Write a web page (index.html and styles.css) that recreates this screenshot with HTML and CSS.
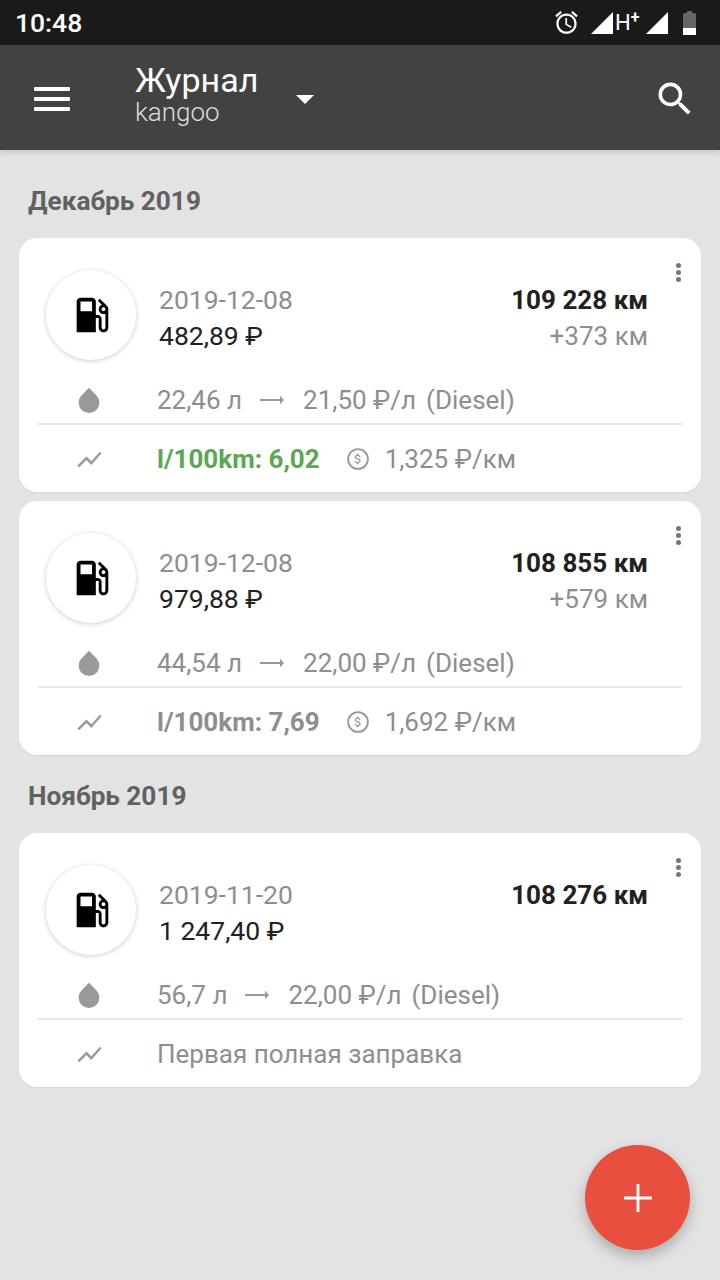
FILE: index.html
```html
<!DOCTYPE html>
<html lang="ru">
<head>
    <meta charset="UTF-8">
    <meta name="viewport" content="width=device-width, initial-scale=1.0">
    <title>Журнал</title>
    <link rel="stylesheet" href="styles.css">
</head>
<body>
    <svg class="sprites" width="0" height="0">
        <symbol id="i-pump" viewBox="0 0 24 24"><path d="M19.77 7.23l.01-.01-3.72-3.72L15 4.56l2.11 2.11c-.94.36-1.61 1.26-1.61 2.33 0 1.38 1.12 2.5 2.5 2.5.36 0 .69-.08 1-.21v7.21c0 .55-.45 1-1 1s-1-.45-1-1V14c0-1.1-.9-2-2-2h-1V5c0-1.1-.9-2-2-2H6c-1.1 0-2 .9-2 2v16h10v-7.5h1.5v5c0 1.38 1.12 2.5 2.5 2.5s2.5-1.12 2.5-2.5V9c0-.69-.28-1.32-.73-1.77zM12 10H6V5h6v5zm6 0c-.55 0-1-.45-1-1s.45-1 1-1 1 .45 1 1-.45 1-1 1z"/></symbol>
        <symbol id="i-drop" viewBox="0 0 24 24"><path d="M12 2.2l6 6.2a8.3 8.3 0 1 1-12 0z"/></symbol>
        <symbol id="i-chart" viewBox="0 0 24 24"><path d="M3.5 18.49l6-6.01 4 4L22 6.92l-1.41-1.41-7.09 7.97-4-4L2 16.99z"/></symbol>
        <symbol id="i-arrow" viewBox="0 0 26 12"><path d="M1 5h20V1.8l4 4.2-4 4.2V7H1z"/></symbol>
        <symbol id="i-money" viewBox="0 0 24 24">
            <circle cx="12" cy="12" r="10.8" fill="none" stroke="currentColor" stroke-width="2"/>
            <path transform="translate(4.2 4.2) scale(.65)" d="M11.8 10.9c-2.27-.59-3-1.2-3-2.15 0-1.09 1.01-1.85 2.7-1.85 1.78 0 2.44.85 2.5 2.1h2.21c-.07-1.72-1.12-3.3-3.21-3.81V3h-3v2.16c-1.94.42-3.5 1.68-3.5 3.61 0 2.31 1.91 3.46 4.7 4.13 2.5.6 3 1.48 3 2.41 0 .69-.49 1.79-2.7 1.79-2.06 0-2.87-.92-2.98-2.1h-2.2c.12 2.19 1.76 3.42 3.68 3.83V21h3v-2.15c1.95-.37 3.5-1.5 3.5-3.55 0-2.84-2.43-3.81-4.7-4.4z"/>
        </symbol>
    </svg>

    <div class="statusbar">
        <span class="clock">10:48</span>
        <div class="status-icons">
            <svg class="alarm" viewBox="0 0 24 24"><path d="M22 5.72l-4.6-3.86-1.29 1.53 4.6 3.86L22 5.72zM7.88 3.39L6.6 1.86 2 5.71l1.29 1.53 4.59-3.85zM12.5 8H11v6l4.75 2.85.75-1.23-4-2.37V8zM12 4c-4.97 0-9 4.03-9 9s4.03 9 9 9 9-4.03 9-9-4.03-9-9-9zm0 16c-3.87 0-7-3.13-7-7s3.13-7 7-7 7 3.13 7 7-3.13 7-7 7z"/></svg>
            <svg class="signal" viewBox="0 0 22 22"><path d="M22 0v22H0z"/></svg>
            <span class="net">H<sup>+</sup></span>
            <svg class="signal" viewBox="0 0 22 22"><path d="M22 0v22H0z"/></svg>
            <div class="battery"><div class="battery-fill"></div></div>
        </div>
    </div>

    <header class="toolbar">
        <div class="menu-btn"><span></span><span></span><span></span></div>
        <div class="title-box">
            <div class="title">Журнал</div>
            <div class="subtitle">kangoo</div>
        </div>
        <div class="caret"></div>
        <svg class="search" viewBox="0 0 24 24"><path d="M15.5 14h-.79l-.28-.27A6.47 6.47 0 0 0 16 9.5 6.5 6.5 0 1 0 9.5 16c1.61 0 3.09-.59 4.23-1.57l.27.28v.79l5 4.99L20.49 19l-4.99-5zm-6 0C7.01 14 5 11.99 5 9.5S7.01 5 9.5 5 14 7.01 14 9.5 11.99 14 9.5 14z"/></svg>
    </header>

    <main class="journal">
        <h2 class="month">Декабрь 2019</h2>

        <article class="card">
            <div class="dots"><i></i><i></i><i></i></div>
            <div class="card-head">
                <div class="pump"><svg><use href="#i-pump"/></svg></div>
                <div class="head-left">
                    <div class="muted">2019-12-08</div>
                    <div class="price">482,89 ₽</div>
                </div>
                <div class="head-right">
                    <div class="odo">109 228 км</div>
                    <div class="muted">+373 км</div>
                </div>
            </div>
            <div class="row row-fuel">
                <div class="row-icon"><svg class="drop"><use href="#i-drop"/></svg></div>
                <span>22,46 л</span>
                <svg class="arrow"><use href="#i-arrow"/></svg>
                <span>21,50 ₽/л</span>
                <span>(Diesel)</span>
            </div>
            <div class="row row-stat">
                <div class="row-icon"><svg class="chart"><use href="#i-chart"/></svg></div>
                <b class="usage good">l/100km: 6,02</b>
                <svg class="money"><use href="#i-money"/></svg>
                <span>1,325 ₽/км</span>
            </div>
        </article>

        <article class="card">
            <div class="dots"><i></i><i></i><i></i></div>
            <div class="card-head">
                <div class="pump"><svg><use href="#i-pump"/></svg></div>
                <div class="head-left">
                    <div class="muted">2019-12-08</div>
                    <div class="price">979,88 ₽</div>
                </div>
                <div class="head-right">
                    <div class="odo">108 855 км</div>
                    <div class="muted">+579 км</div>
                </div>
            </div>
            <div class="row row-fuel">
                <div class="row-icon"><svg class="drop"><use href="#i-drop"/></svg></div>
                <span>44,54 л</span>
                <svg class="arrow"><use href="#i-arrow"/></svg>
                <span>22,00 ₽/л</span>
                <span>(Diesel)</span>
            </div>
            <div class="row row-stat">
                <div class="row-icon"><svg class="chart"><use href="#i-chart"/></svg></div>
                <b class="usage">l/100km: 7,69</b>
                <svg class="money"><use href="#i-money"/></svg>
                <span>1,692 ₽/км</span>
            </div>
        </article>

        <h2 class="month">Ноябрь 2019</h2>

        <article class="card">
            <div class="dots"><i></i><i></i><i></i></div>
            <div class="card-head">
                <div class="pump"><svg><use href="#i-pump"/></svg></div>
                <div class="head-left">
                    <div class="muted">2019-11-20</div>
                    <div class="price">1 247,40 ₽</div>
                </div>
                <div class="head-right">
                    <div class="odo">108 276 км</div>
                </div>
            </div>
            <div class="row row-fuel">
                <div class="row-icon"><svg class="drop"><use href="#i-drop"/></svg></div>
                <span>56,7 л</span>
                <svg class="arrow"><use href="#i-arrow"/></svg>
                <span>22,00 ₽/л</span>
                <span>(Diesel)</span>
            </div>
            <div class="row row-stat">
                <div class="row-icon"><svg class="chart"><use href="#i-chart"/></svg></div>
                <span>Первая полная заправка</span>
            </div>
        </article>
    </main>

    <button class="fab"><svg viewBox="0 0 28 28"><path d="M12.6 0h2.8v12.6H28v2.8H15.4V28h-2.8V15.4H0v-2.8h12.6z"/></svg></button>
</body>
</html>
```

FILE: styles.css
```css
* {
    box-sizing: border-box;
}
body {
    position: relative;
    width: 720px;
    height: 1280px;
    margin: 0;
    overflow: hidden;
    font-family: Roboto, "Noto Sans", sans-serif;
    font-size: 26.5px;
    color: #212121;
    background: #e3e3e3;
}
.sprites {
    position: absolute;
}

/* status bar */
.statusbar {
    display: flex;
    align-items: center;
    justify-content: space-between;
    height: 45px;
    padding: 0 24px 0 15px;
    background: #1a1a1a;
    color: #fff;
}
.clock {
    font-size: 26.5px;
    font-weight: 500;
}
.status-icons {
    display: flex;
    align-items: center;
    fill: #fff;
}
.alarm {
    width: 27px;
    height: 27px;
    margin-right: 11px;
}
.signal {
    width: 22px;
    height: 22px;
}
.net {
    width: 31px;
    margin-left: 2px;
    font-size: 22px;
    line-height: 22px;
}
.net sup {
    font-size: 16px;
    font-weight: 700;
    line-height: 0;
    vertical-align: 7px;
}
.signal + .battery {
    margin-left: 15px;
}
.battery {
    position: relative;
    width: 13px;
    height: 22px;
    margin-top: 2px;
    background: #666;
    border-radius: 2px 2px 0 0;
}
.battery::before {
    content: "";
    position: absolute;
    top: -2px;
    left: 4px;
    width: 5px;
    height: 2px;
    background: #666;
}
.battery-fill {
    position: absolute;
    left: 0;
    right: 0;
    bottom: 0;
    height: 7px;
    background: #fff;
}

/* toolbar */
.toolbar {
    display: flex;
    align-items: center;
    height: 105px;
    padding-left: 34px;
    background: #424242;
    box-shadow: 0 2px 6px rgba(0,0,0,0.15);
    color: #fff;
}
.menu-btn {
    display: flex;
    flex-direction: column;
    gap: 6px;
    width: 36px;
    margin-top: 2px;
}
.menu-btn span {
    height: 4px;
    background: #fff;
    border-radius: 1px;
}
.title-box {
    margin-left: 65px;
    width: 161px;
    margin-top: -4px;
}
.title {
    font-size: 34px;
    line-height: 34px;
    margin-top: -2px;
}
.subtitle {
    font-size: 26px;
    font-weight: 300;
    line-height: 30px;
    color: #ddd;
}
.caret {
    width: 0;
    height: 0;
    margin-top: 3px;
    border-left: 9.5px solid transparent;
    border-right: 9.5px solid transparent;
    border-top: 9.5px solid #fff;
}
.search {
    width: 44px;
    height: 44px;
    margin-left: auto;
    margin-right: 23px;
    margin-top: 3px;
    fill: #fff;
}

/* journal list */
.journal {
    padding: 0 19px;
}
.month {
    margin: 0;
    padding: 33px 9px 19px;
    font-size: 26.2px;
    line-height: 36px;
    font-weight: 700;
    color: #616161;
}
.card + .month {
    padding-top: 14px;
    padding-bottom: 19px;
}
.card {
    position: relative;
    height: 254px;
    margin-bottom: 9px;
    padding: 32px 19px 0;
    background: #fff;
    border-radius: 18px;
    box-shadow: 0 1px 2px rgba(0,0,0,0.06);
}
.dots {
    position: absolute;
    top: 25px;
    right: 20px;
    display: flex;
    flex-direction: column;
    gap: 2px;
}
.dots i {
    width: 5px;
    height: 5px;
    background: #757575;
    border-radius: 50%;
}
.card-head {
    display: flex;
    height: 90px;
    padding-left: 8px;
}
.pump {
    display: flex;
    align-items: center;
    justify-content: center;
    flex: none;
    width: 90px;
    height: 90px;
    background: #fff;
    border-radius: 50%;
    box-shadow: 0 1px 5px rgba(0,0,0,0.2);
}
.pump svg {
    width: 46px;
    height: 46px;
    margin-left: 1px;
    fill: #000;
}
.head-left,
.head-right {
    padding-top: 12px;
    line-height: 36px;
}
.head-left {
    margin-left: 23px;
}
.head-right {
    margin-left: auto;
    margin-right: 34px;
    text-align: right;
    font-size: 26px;
}
.muted {
    color: #8e8e8e;
}
.price {
    color: #212121;
}
.odo {
    font-weight: 700;
    color: #212121;
}
.row {
    display: flex;
    align-items: center;
    font-size: 26px;
    color: #8e8e8e;
    fill: #999;
}
.row-icon {
    display: flex;
    justify-content: center;
    flex: none;
    width: 119px;
    padding-right: 17px;
}
.row-fuel {
    height: 65px;
    padding-top: 16px;
    border-bottom: 2px solid #e6e6e6;
}
.row-fuel .arrow {
    width: 26px;
    height: 12px;
    margin: 0 18px 0 17px;
}
.row-fuel span:last-child {
    margin-left: 10px;
}
.row-stat {
    height: 68px;
}
.drop {
    width: 30px;
    height: 30px;
}
.chart {
    width: 29px;
    height: 29px;
}
.money {
    flex: none;
    width: 22px;
    height: 22px;
    margin: 0 16px 0 27px;
    color: #999;
}
.usage {
    font-weight: 700;
}
.usage.good {
    color: #5aa84f;
}

.fab {
    position: absolute;
    left: 585px;
    top: 1145px;
    display: flex;
    align-items: center;
    justify-content: center;
    width: 105px;
    height: 105px;
    padding: 0;
    border: 0;
    border-radius: 50%;
    background: #e94f3f;
    box-shadow: 0 6px 14px rgba(0,0,0,0.25);
}
.fab svg {
    width: 28px;
    height: 28px;
    fill: #fff;
}
```
